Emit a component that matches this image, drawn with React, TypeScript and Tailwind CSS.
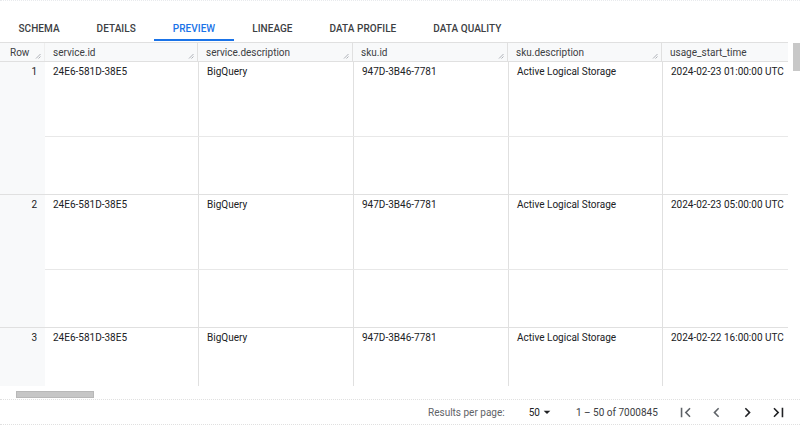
import React from 'react';

const tabs = ['SCHEMA', 'DETAILS', 'PREVIEW', 'LINEAGE', 'DATA PROFILE', 'DATA QUALITY'];

const columns = [
    { name: 'service.id', w: 'w-[153px]' },
    { name: 'service.description', w: 'w-[155px]' },
    { name: 'sku.id', w: 'w-[155px]' },
    { name: 'sku.description', w: 'w-[154px]' },
    { name: 'usage_start_time', w: 'w-[126px]' },
];

const rows = [
    ['24E6-581D-38E5', 'BigQuery', '947D-3B46-7781', 'Active Logical Storage', '2024-02-23 01:00:00 UTC'],
    ['24E6-581D-38E5', 'BigQuery', '947D-3B46-7781', 'Active Logical Storage', '2024-02-23 05:00:00 UTC'],
    ['24E6-581D-38E5', 'BigQuery', '947D-3B46-7781', 'Active Logical Storage', '2024-02-22 16:00:00 UTC'],
];

function ResizeHandle() {
    return (
        <svg className="absolute right-[3px] bottom-[2px] w-[6px] h-[6px]" viewBox="0 0 6 6">
            <path d="M1 5.5L5.5 1M3.5 5.5L5.5 3.5" stroke="#9aa0a6" strokeWidth="0.8" />
        </svg>
    );
}

function Icon({ d, className }: { d: string; className?: string }) {
    return (
        <svg className={className} viewBox="0 0 24 24" fill="currentColor">
            <path d={d} />
        </svg>
    );
}

export default function App() {
    return (
        <div className="w-[800px] h-[427px] bg-white overflow-hidden font-['Roboto',sans-serif] text-[#202124]">
            <div className="border-t border-dotted border-[#e8eaed]" />
            {/* tabs */}
            <div className="flex items-end h-[40px]">
                {tabs.map((t) => (
                    <div
                        key={t}
                        className={`px-[18.5px] pb-[3px] text-[10px] font-medium tracking-[0.05px] border-b-2 ${
                            t === 'PREVIEW' ? 'text-[#1a73e8] border-[#1a73e8]' : 'text-[#3c4043] border-transparent'
                        }`}
                    >
                        {t}
                    </div>
                ))}
            </div>

            {/* table */}
            <div className="flex mt-[1px]">
                <div className="w-[788px]">
                    {/* header */}
                    <div className="flex h-[20px] border-y border-[#e0e0e0] bg-[#f8f9fa] text-[10px] text-[#3c4043]">
                        <div className="relative w-[45px] pl-[10px] flex items-center border-r border-[#eeeeee]">
                            Row
                            <ResizeHandle />
                        </div>
                        {columns.map((c, i) => (
                            <div
                                key={c.name}
                                className={`relative ${c.w} pl-[8px] flex items-center ${i < columns.length - 1 ? 'border-r border-[#e0e0e0]' : ''}`}
                            >
                                {c.name}
                                {i < columns.length - 1 && <ResizeHandle />}
                            </div>
                        ))}
                    </div>

                    {/* body */}
                    <div className="h-[324px] overflow-hidden text-[10px]">
                        {rows.map((r, ri) => (
                            <div key={ri} className="flex h-[133px] border-b border-[#e0e0e0]">
                                <div className="w-[45px] bg-[#f8f9fa] pr-[8px] pt-[2px] text-right">{ri + 1}</div>
                                <div className="flex flex-col">
                                    <div className="flex h-[75px] border-b border-[#e8e8e8]">
                                        {columns.map((c, ci) => (
                                            <div
                                                key={c.name}
                                                className={`${c.w} pl-[8px] pt-[2px] ${ci > 0 ? 'border-l border-[#e0e0e0]' : ''}`}
                                            >
                                                {r[ci]}
                                            </div>
                                        ))}
                                    </div>
                                    <div className="flex flex-1">
                                        {columns.map((c, ci) => (
                                            <div key={c.name} className={`${c.w} ${ci > 0 ? 'border-l border-[#e0e0e0]' : ''}`} />
                                        ))}
                                    </div>
                                </div>
                            </div>
                        ))}
                    </div>
                </div>
                <div className="ml-[5px] mt-[1px] w-[7px] h-[28px] bg-[#c8c8c8]" />
            </div>

            {/* horizontal scrollbar */}
            <div className="h-[13px] pl-[16px] pt-[5px]">
                <div className="w-[78px] h-[7px] bg-[#c6c6c6] border border-[#b8b8b8]" />
            </div>

            {/* footer */}
            <div className="flex items-center h-[26px] border-t border-dotted border-[#e0e0e0] border-b-[1px] text-[10px] text-[#5f6368]">
                <div className="ml-[428px]">Results per page:</div>
                <div className="ml-[24px] flex items-center text-[#202124]">
                    50
                    <Icon d="M7 10l5 5 5-5z" className="w-[16px] h-[16px] -ml-[1px]" />
                </div>
                <div className="ml-[21px] text-[#3c4043]">1 – 50 of 7000845</div>
                <div className="ml-[18px] flex items-center gap-[12px]">
                    <Icon d="M18.41 16.59L13.82 12l4.59-4.59L17 6l-6 6 6 6zM6 6h2v12H6z" className="w-[19px] h-[19px] text-[#5f6368]" />
                    <Icon d="M15.41 7.41L14 6l-6 6 6 6 1.41-1.41L10.83 12z" className="w-[19px] h-[19px] text-[#5f6368]" />
                    <Icon d="M10 6L8.59 7.41 13.17 12l-4.58 4.59L10 18l6-6z" className="w-[19px] h-[19px] text-[#202124]" />
                    <Icon d="M5.59 7.41L10.18 12l-4.59 4.59L7 18l6-6-6-6zM16 6h2v12h-2z" className="w-[19px] h-[19px] text-[#202124]" />
                </div>
            </div>
        </div>
    );
}
